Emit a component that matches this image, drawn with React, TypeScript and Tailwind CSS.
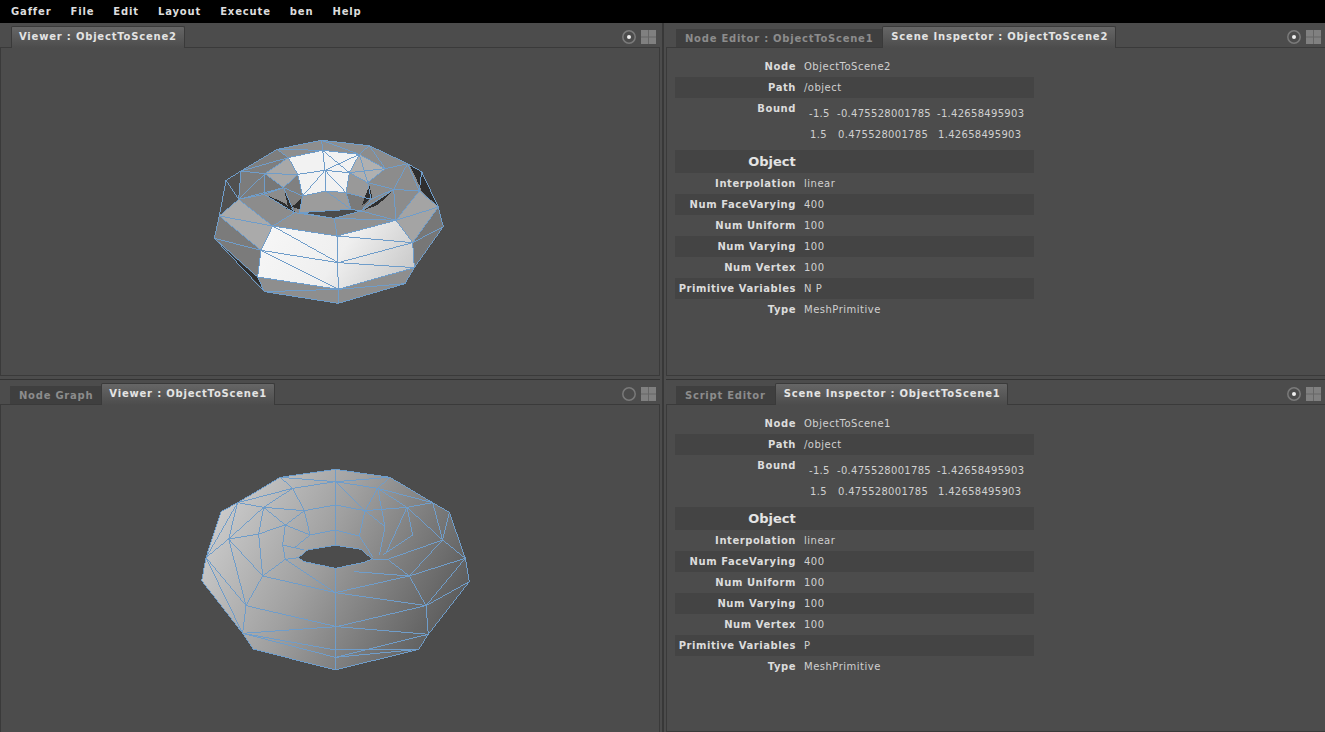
const WIRE = "#6f9dca";

function path(edges: string) {
  return edges
    .trim()
    .split(/\s*;\s*/)
    .filter(Boolean)
    .map((e) => "M" + e.trim().split(/\s+/).join("L"))
    .join("");
}

const p: Record<string, string> = {
  a: "362,28", b: "228,55", c: "505,44", d: "120,120", e: "75,148", f: "55,255", g: "40,322", h: "190,482", i: "412,517", j: "612,458", k: "640,410", l: "727,287", m: "712,228", n: "662,122", o: "620,98",
  P: "262,80", q: "365,58", r: "475,70", s: "553,113", t: "192,128", u: "290,130", v: "372,118", w: "445,125", x: "500,155", y: "190,190", z: "113,205", A: "248,170", B: "305,195", C: "375,180", D: "435,185", E: "655,180", F: "585,268", G: "400,262", H: "215,285", I: "408,315", J: "180,358", K: "170,438", L: "412,475", M: "635,335", N: "412,395", O: "280,245", Q: "295,245", R: "450,235", S: "480,240", T: "510,205", U: "578,175",
};
const ref = (s: string) => s.trim().split(/\s+/).map((k) => p[k]).join(" ");

const topEdges = [
  "a c", "c o", "o n", "n m", "m l", "l k", "k j", "j i", "i h", "h g", "g f", "f e", "e d", "d b", "b a", "g K", "K h",
  "b P", "b q", "a q", "a r", "c r", "c s", "r s", "s o", "o U", "o E", "n E", "E m", "E U", "E F", "m F", "F U", "F M", "m M", "l M", "M k", "M N",
  "d P", "d t", "d z", "e z", "z f", "z t", "t P", "t y", "y z", "z H", "f H", "f J", "g J", "J H", "J K", "K L", "h L", "L i", "L j", "L k", "H I", "I F", "I L", "H N", "J N", "J L", "N k", "I M", "H O", "O G", "G F", "G I", "G Q",
  "P q", "q r", "P u", "t u", "u v", "v q", "v r", "v w", "v D", "r w", "q w", "u B", "B v", "w D", "w s", "r x", "w x", "s x", "x U", "x T", "B C", "C D", "C v", "D R", "B Q", "C R", "A B", "A t", "A u", "A y", "y O", "A O", "Q R", "R S", "S G", "Q G", "D T", "T S", "T U", "U S", "S F", "P u", "z A",
].map((e) => ref(e)).join(";");

const bottomEdges = `
433,28 597,52;597,52 725,128;725,128 775,157;775,157 823,295;823,295 835,365;835,365 712,523;712,523 683,568;683,568 433,630;433,630 187,567;187,567 155,520;155,520 32,362;32,362 45,293;45,293 90,155;90,155 140,128;140,128 268,52;268,52 433,28;
322,293 350,270;350,270 433,256;433,256 510,268;510,268 543,297;543,297 520,307;520,307 433,325;433,325 340,305;340,305 322,293;
268,52 433,65;268,52 305,85;140,128 305,85;305,85 433,65;305,85 340,152;305,85 218,142;140,128 218,142;218,142 340,152;340,152 433,135;433,135 522,152;
433,65 522,152;433,65 597,52;433,65 560,85;597,52 560,85;560,85 725,128;560,85 522,152;560,85 582,200;560,85 648,142;725,128 648,142;725,128 755,240;775,157 755,240;648,142 755,240;648,142 665,225;522,152 648,142;522,152 505,228;522,152 582,200;648,142 585,280;433,28 433,256;
140,128 113,237;218,142 113,237;218,142 203,222;218,142 283,195;340,152 283,195;340,152 357,225;113,237 203,222;203,222 283,195;113,237 215,348;203,222 215,348;283,195 357,225;283,195 275,255;357,225 433,210;433,210 505,228;357,225 312,262;275,255 283,298;275,255 340,270;283,298 215,348;283,298 322,293;215,348 165,437;113,237 165,437;45,293 113,237;140,128 45,293;45,293 165,437;45,293 155,520;
215,348 433,398;283,298 433,398;340,305 433,325;165,437 437,500;165,437 155,520;155,520 437,500;155,520 433,592;155,520 433,570;433,325 433,630;433,398 655,348;433,398 705,437;437,500 705,437;437,500 712,523;433,592 712,523;433,592 683,568;433,570 683,568;
655,348 490,335;655,348 590,298;655,348 705,437;655,348 823,295;755,240 655,348;755,240 590,298;823,295 705,437;835,365 705,437;705,437 712,523;835,365 712,523;755,240 823,295;665,225 575,285;582,200 565,285;505,228 545,290;543,297 590,298;
`;

function TopTorus() {
  return (
    <svg className="block w-[659px] h-[328px]" viewBox="0 47 659 328" shapeRendering="crispEdges">
      <defs>
        <linearGradient id="frontWhite" gradientUnits="userSpaceOnUse" x1="0" y1="0" x2="650" y2="450">
          <stop offset="0.35" stopColor="#f8f8f8" />
          <stop offset="0.7" stopColor="#efefef" />
          <stop offset="1" stopColor="#c4c4c4" />
        </linearGradient>
      </defs>
      <g transform="translate(200 130) scale(0.3333)">
        <polygon fill="#8c8c8c" points={ref("a c o n m l k j i h K g f e d b")} />
        <polygon fill="#505050" points={ref("e d z f")} />
        <polygon fill="#7e7e7e" points={ref("d b P t")} />
        <polygon fill="#8e8e8e" points={ref("b a c r q P")} />
        <polygon fill="#7c7c7c" points={ref("d t y z")} />
        <polygon fill="#777" points={ref("t A y")} />
        <polygon fill="#aaa" points={ref("f z H J")} />
        <polygon fill="#7b7b7b" points={ref("f J K g")} />
        <polygon fill="#929292" points={ref("H O Q G F I")} />
        <polygon fill="#a4a4a4" points={ref("F E m M")} />
        <polygon fill="#777" points={ref("m l k M")} />
        <polygon fill="url(#frontWhite)" points={ref("H I F M k L K J")} />
        <polygon fill="#8e8e8e" points={ref("K L k j i h")} />
        <polygon fill="#f2f2f2" points={ref("P q r w D C B u")} />
        <polygon fill="#a8a8a8" points={ref("t P u A")} />
        <polygon fill="#b0b0b0" points={ref("r s x w")} />
        <polygon fill="#999" points={ref("w x T D")} />
        <polygon fill="#8c8c8c" points={ref("s o U x")} />
        <polygon fill="#808080" points={ref("A u B O")} />
        <polygon fill="#9c9c9c" points={ref("B C D R Q")} />
        <polygon fill="#7a7a7a" points={ref("D T S R")} />
        <polygon fill="#2f2f2f" points="190,190 245,213 282,242 260,235" />
        <polygon fill="#2f2f2f" points="248,170 272,230 262,232" />
        <polygon fill="#2f2f2f" points="272,228 305,200 298,235" />
        <polygon fill="#2f2f2f" points="488,238 580,176 530,222" />
        <polygon fill="#2f2f2f" points="505,162 514,198 482,225" />
        <polygon fill="#2f2f2f" points="48,335 172,442 185,472" />
        <polygon fill="#2f2f2f" points="625,100 662,122 662,178" />
        <polygon fill="#2f2f2f" points="662,125 710,225 660,180" />
        <polygon fill="#2f2f2f" points="727,292 645,410 690,345" />
        <polygon fill="#4c4c4c" points={ref("Q R S G")} />
        <path d={path(topEdges)} fill="none" stroke={WIRE} strokeWidth="3" />
      </g>
    </svg>
  );
}

function BottomTorus() {
  return (
    <svg className="block w-[659px] h-[327px]" viewBox="0 405 659 327" shapeRendering="crispEdges">
      <defs>
        <linearGradient id="bottomShade" gradientUnits="userSpaceOnUse" x1="40" y1="100" x2="800" y2="520">
          <stop offset="0" stopColor="#d2d2d2" />
          <stop offset="0.45" stopColor="#a0a0a0" />
          <stop offset="1" stopColor="#565656" />
        </linearGradient>
      </defs>
      <g transform="translate(190 460) scale(0.3333)">
        <polygon
          fill="url(#bottomShade)"
          points="433,28 597,52 725,128 775,157 823,295 835,365 712,523 683,568 433,630 187,567 155,520 32,362 45,293 90,155 140,128 268,52"
        />
        <polygon fill="#4c4c4c" points="322,293 350,270 433,256 510,268 543,297 520,307 433,325 340,305" />
        <path d={path(bottomEdges)} fill="none" stroke={WIRE} strokeWidth="3" />
      </g>
    </svg>
  );
}

function Icons({ on }: { on: boolean }) {
  return (
    <div className="ml-auto flex items-center gap-[5px] self-center pr-[4px] pt-[3px]">
      <svg width="14" height="14" viewBox="0 0 14 14">
        <circle cx="7" cy="7" r="6.2" fill="none" stroke="#7a7a7a" strokeWidth="1.5" />
        {on ? <circle cx="7" cy="7" r="2" fill="#f0f0f0" /> : null}
      </svg>
      <svg width="15" height="14" viewBox="0 0 15 14">
        <rect width="15" height="14" fill="#666666" />
        <rect x="0" y="0" width="7" height="6.5" fill="#808080" />
        <rect x="8" y="0" width="7" height="6.5" fill="#808080" />
        <rect x="0" y="7.5" width="7" height="6.5" fill="#808080" />
        <rect x="8" y="7.5" width="7" height="6.5" fill="#808080" />
      </svg>
    </div>
  );
}

function Tabs({ inactive, active, on, tight }: { inactive?: string; active: string; on: boolean; tight?: boolean }) {
  return (
    <div className={`flex h-[24px] shrink-0 items-end ${inactive ? "pl-[10px]" : "pl-[11px]"}`}>
      {inactive ? (
        <div
          className={`flex h-[18px] items-center whitespace-nowrap bg-[#3f3f3f] pl-[9px] text-[10px] font-bold tracking-[0.75px] text-[#8c8c8c] ${tight ? "pr-[8px]" : "pr-[9px]"}`}
        >
          {inactive}
        </div>
      ) : null}
      <div
        className={`relative top-[1px] flex h-[22px] items-start whitespace-nowrap rounded-t-[2px] border border-b-0 border-[#3a3a3a] bg-gradient-to-b from-[#666666] to-[#4c4c4c] pr-[7px] pt-[3px] text-[10px] font-bold leading-[14px] tracking-[0.8px] text-[#e4e4e4] ${tight || !inactive ? "pl-[7px]" : "pl-[8px]"}`}
      >
        {active}
      </div>
      <Icons on={on} />
    </div>
  );
}

function Row({ label, value, strip }: { label: string; value: string; strip?: boolean }) {
  return (
    <div className={`flex h-[21px] items-center ${strip ? "bg-[#444444]" : ""}`}>
      <div className="w-[121px] whitespace-nowrap text-right text-[10px] font-bold tracking-[0.55px] text-[#dcdcdc]">{label}</div>
      <div className="ml-[8px] whitespace-nowrap text-[10px] tracking-[0.5px] text-[#d0d0d0]">{value}</div>
    </div>
  );
}

function Inspector({ node, vars }: { node: string; vars: string }) {
  return (
    <div className="flex min-h-0 flex-1 flex-col border border-r-0 border-[#3a3a3a] pl-[8px] pt-[8px]">
      <div className="w-[359px]">
        <Row label="Node" value={node} />
        <Row label="Path" value="/object" strip />
        <div className="flex h-[52px]">
          <div className="mt-[4px] h-[14px] w-[121px] text-right text-[10px] font-bold leading-[14px] tracking-[0.55px] text-[#dcdcdc]">
            Bound
          </div>
          <div className="ml-[13px] pt-[5px] text-[10px] leading-[21px] tracking-[0.3px] text-[#d0d0d0]">
            <div className="flex">
              <span className="w-[28px]">-1.5</span>
              <span className="w-[100px]">-0.475528001785</span>
              <span>-1.42658495903</span>
            </div>
            <div className="flex pl-[1px]">
              <span className="w-[28px]">1.5</span>
              <span className="w-[100px]">0.475528001785</span>
              <span>1.42658495903</span>
            </div>
          </div>
        </div>
        <div className="flex h-[23px] items-center justify-center bg-[#444444] pr-[165px] text-[13px] font-bold text-[#e4e4e4]">
          Object
        </div>
        <Row label="Interpolation" value="linear" />
        <Row label="Num FaceVarying" value="400" strip />
        <Row label="Num Uniform" value="100" />
        <Row label="Num Varying" value="100" strip />
        <Row label="Num Vertex" value="100" />
        <Row label="Primitive Variables" value={vars} strip />
        <Row label="Type" value="MeshPrimitive" />
      </div>
    </div>
  );
}

function HSplit() {
  return <div className="h-[4px] shrink-0 border-b border-[#333333]" />;
}

export default function App() {
  const menu = ["Gaffer", "File", "Edit", "Layout", "Execute", "ben", "Help"];
  return (
    <div className="flex h-[732px] w-[1325px] flex-col overflow-hidden bg-[#4c4c4c] font-['DejaVu_Sans',sans-serif]">
      <div className="flex h-[23px] shrink-0 items-center gap-[19px] bg-black pl-[11px] text-[10px] font-bold tracking-[0.85px] text-[#dddddd]">
        {menu.map((m) => (
          <span key={m}>{m}</span>
        ))}
      </div>
      <div className="flex min-h-0 flex-1">
        <div className="flex w-[660px] shrink-0 flex-col">
          <div className="flex h-[353px] shrink-0 flex-col">
            <Tabs active="Viewer : ObjectToScene2" on />
            <div className="min-h-0 flex-1 border border-[#3a3a3a]">
              <TopTorus />
            </div>
          </div>
          <HSplit />
          <div className="flex min-h-0 flex-1 flex-col">
            <Tabs inactive="Node Graph" active="Viewer : ObjectToScene1" on={false} tight />
            <div className="min-h-0 flex-1 border border-b-0 border-[#3a3a3a]">
              <BottomTorus />
            </div>
          </div>
        </div>
        <div className="mx-[2px] w-[2px] shrink-0 bg-[#383838]" />
        <div className="flex min-w-0 flex-1 flex-col">
          <div className="flex h-[353px] shrink-0 flex-col">
            <Tabs inactive="Node Editor : ObjectToScene1" active="Scene Inspector : ObjectToScene2" on />
            <Inspector node="ObjectToScene2" vars="N P" />
          </div>
          <HSplit />
          <div className="flex min-h-0 flex-1 flex-col">
            <Tabs inactive="Script Editor" active="Scene Inspector : ObjectToScene1" on />
            <Inspector node="ObjectToScene1" vars="P" />
          </div>
        </div>
      </div>
    </div>
  );
}
